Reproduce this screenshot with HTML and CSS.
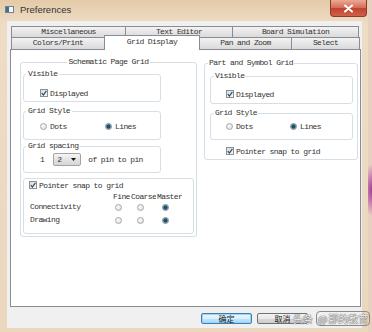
FILE: index.html
```html
<!DOCTYPE html>
<html lang="en">
    <head>
        <meta charset="UTF-8" />
        <title>Preferences</title>
        <link rel="stylesheet" href="styles.css">
    </head>
    <body>
        <div class="window">
            <div class="titlebar">
                <span class="app-icon"></span>
                <span class="title">Preferences</span>
                <span class="close">
                    <svg width="11" height="9" viewBox="0 0 11 9"><path d="M2 1.5 L9 7.5 M9 1.5 L2 7.5" stroke="#fff" stroke-width="2" stroke-linecap="round"/></svg>
                </span>
            </div>

            <div class="client">
                <div class="tab-row row1">
                    <div class="tab t-misc">Miscellaneous</div>
                    <div class="tab t-text">Text Editor</div>
                    <div class="tab t-board">Board Simulation</div>
                </div>
                <div class="tab-row row2">
                    <div class="tab t-colors">Colors/Print</div>
                    <div class="tab t-grid active">Grid Display</div>
                    <div class="tab t-pan">Pan and Zoom</div>
                    <div class="tab t-select">Select</div>
                </div>

                <div class="panel">
                    <fieldset class="group outer schematic">
                        <legend class="centered">Schematic Page Grid</legend>

                        <fieldset class="group inner l-visible">
                            <legend>Visible</legend>
                            <div class="row indent">
                                <span class="cb"><svg width="6" height="6" viewBox="0 0 6 6"><path d="M0.8 3.2 L2.4 5 L5.4 0.8" fill="none" stroke="#2b4d6e" stroke-width="1.2"/></svg></span>
                                <span class="lbl">Displayed</span>
                            </div>
                        </fieldset>

                        <fieldset class="group inner l-style">
                            <legend>Grid Style</legend>
                            <div class="row indent">
                                <span class="opt l-dots"><span class="rb"></span>Dots</span>
                                <span class="opt"><span class="rb on"></span>Lines</span>
                            </div>
                        </fieldset>

                        <fieldset class="group inner l-spacing">
                            <legend>Grid spacing</legend>
                            <div class="row tall indent">
                                <span>1</span>
                                <span class="dropdown">2<svg width="5" height="3" viewBox="0 0 5 3"><path d="M0 0 H5 L2.5 3 Z" fill="#111"/></svg></span>
                                <span class="after-drop">of pin to pin</span>
                            </div>
                        </fieldset>

                        <div class="snapbox">
                            <div class="row">
                                <span class="cb"><svg width="6" height="6" viewBox="0 0 6 6"><path d="M0.8 3.2 L2.4 5 L5.4 0.8" fill="none" stroke="#2b4d6e" stroke-width="1.2"/></svg></span>
                                <span class="lbl">Pointer snap to grid</span>
                            </div>
                            <div class="snap-grid">
                                <span></span>
                                <span class="hd">Fine</span>
                                <span class="hd">Coarse</span>
                                <span class="hd">Master</span>

                                <span class="name">Connectivity</span>
                                <span class="rb c-fine"></span>
                                <span class="rb c-coarse"></span>
                                <span class="rb on c-master"></span>

                                <span class="name">Drawing</span>
                                <span class="rb c-fine"></span>
                                <span class="rb c-coarse"></span>
                                <span class="rb on c-master"></span>
                            </div>
                        </div>
                    </fieldset>

                    <fieldset class="group outer part">
                        <legend class="shifted">Part and Symbol Grid</legend>

                        <fieldset class="group inner r-visible">
                            <legend>Visible</legend>
                            <div class="row r-indent">
                                <span class="cb"><svg width="6" height="6" viewBox="0 0 6 6"><path d="M0.8 3.2 L2.4 5 L5.4 0.8" fill="none" stroke="#2b4d6e" stroke-width="1.2"/></svg></span>
                                <span class="lbl">Displayed</span>
                            </div>
                        </fieldset>

                        <fieldset class="group inner r-style">
                            <legend>Grid Style</legend>
                            <div class="row r-indent">
                                <span class="opt r-dots"><span class="rb"></span>Dots</span>
                                <span class="opt"><span class="rb on"></span>Lines</span>
                            </div>
                        </fieldset>

                        <div class="row r-snap">
                            <span class="cb"><svg width="6" height="6" viewBox="0 0 6 6"><path d="M0.8 3.2 L2.4 5 L5.4 0.8" fill="none" stroke="#2b4d6e" stroke-width="1.2"/></svg></span>
                            <span class="lbl">Pointer snap to grid</span>
                        </div>
                    </fieldset>
                </div>

                <div class="buttons">
                    <button class="btn default">确定</button>
                    <button class="btn">取消</button>
                    <div class="watermark">
                        <span class="wm-brand">头条</span>
                        <span class="wm-box"><span class="wm-at">@</span>那的教育</span>
                    </div>
                </div>
            </div>
        </div>
    </body>
</html>
```

FILE: styles.css
```css
* {
  box-sizing: border-box;
}
body {
  margin: 0;
  width: 372px;
  height: 332px;
  overflow: hidden;
  background: radial-gradient(ellipse 10px 26px at 372px 190px, #9a3f92 0, #c97fb0 50%, #e7d0bf 100%), #e8d4bd;
  font-family: 'Liberation Mono', monospace;
  font-size: 8px;
  letter-spacing: -0.6px;
  color: #333;
}
.window {
  width: 368px;
  height: 332px;
  display: flex;
  flex-direction: column;
  padding-bottom: 4px;
  background: linear-gradient(180deg, #e4cba8, #eedcc5 24px, #ead7be);
}

/* title bar */
.titlebar {
  height: 21px;
  display: flex;
  align-items: flex-start;
}
.app-icon {
  margin: 6px 0 0 5px;
  width: 9px;
  height: 7px;
  border: 1px solid #6f8391;
  background: linear-gradient(90deg, #3f6f9a 0 3px, #f4f7fa 3px);
}
.title {
  margin: 4px 0 0 6px;
  font-family: 'Liberation Sans', sans-serif;
  font-size: 9.5px;
  letter-spacing: 0;
  line-height: 12px;
  color: #333;
}
.close {
  margin-left: auto;
  margin-right: 1px;
  width: 37px;
  height: 17px;
  display: flex;
  align-items: center;
  justify-content: center;
  border: 1px solid #8e3a2e;
  border-top: none;
  border-radius: 0 0 4px 4px;
  background: linear-gradient(180deg, #e9a996, #d46a55 50%, #c2422d 51%, #d0604a);
}

/* client area */
.client {
  flex: 1;
  margin: 0 6px 0 7px;
  padding: 5px 1px 0 3px;
  background: #f0f0f0;
  display: flex;
  flex-direction: column;
}

/* tabs */
.tab-row {
  display: flex;
  margin: 0 1px;
}
.row1 {
  height: 11px;
}
.row2 {
  height: 12px;
  align-items: flex-end;
}
.tab {
  height: 100%;
  border: 1px solid #898c95;
  border-bottom: none;
  margin-left: -1px;
  background: linear-gradient(180deg, #f3f3f3, #e6e6e6 50%, #dadada);
  text-align: center;
  line-height: 10px;
  white-space: nowrap;
}
.tab:first-child {
  margin-left: 0;
}
.t-misc { width: 115px; }
.t-text { width: 108px; }
.t-board { width: 127px; }
.t-colors { width: 94px; }
.t-grid { width: 96px; }
.t-pan { width: 93px; }
.t-select { width: 69px; }
.tab.active {
  position: relative;
  z-index: 1;
  height: 15px;
  margin-bottom: -1px;
  background: #fff;
  line-height: 12px;
}

/* panel */
.panel {
  height: 258px;
  border: 1px solid #898c95;
  background: #fff;
  display: grid;
  grid-template-columns: 177px 154px;
  column-gap: 7px;
  align-items: start;
  padding: 7px 0 0 9px;
}
.group {
  margin: 0;
  min-width: 0;
  border: 1px solid #d5dfe5;
  border-radius: 3px;
}
.group legend {
  padding: 0 2px;
  line-height: 10px;
}
.group legend.centered {
  margin: 0 auto;
}
.schematic {
  padding: 2px 2px 2px 2px;
}
.part {
  margin-top: 1px;
  padding: 3px 4px 3px 5px;
}
.part legend.shifted {
  margin-left: -2px;
  padding: 0 1px;
}

.inner {
  width: 138px;
  padding-left: 2px;
  padding-right: 2px;
}
.l-visible { padding-top: 9px; padding-bottom: 3px; margin-bottom: 4px; }
.l-style { padding-top: 5px; padding-bottom: 8px; margin-bottom: 1px; }
.l-spacing { padding-top: 2px; padding-bottom: 6px; margin-bottom: 5px; }

.part .inner {
  width: 143px;
  padding-left: 3px;
}
.part .inner legend {
  padding: 0 1px;
}
.r-visible { padding-top: 8px; padding-bottom: 4px; margin-bottom: 4px; }
.r-style { padding-top: 3px; padding-bottom: 8px; }

/* rows and controls */
.row {
  display: flex;
  align-items: center;
  height: 10px;
  white-space: nowrap;
}
.row.tall {
  height: 13px;
}
.indent {
  padding-left: 14px;
}
.r-indent {
  padding-left: 12px;
}
.r-snap {
  margin: 6px 0 0 16px;
}
.cb {
  width: 8px;
  height: 8px;
  flex-shrink: 0;
  display: flex;
  align-items: center;
  justify-content: center;
  border: 1px solid #8e8f8f;
  background: linear-gradient(135deg, #d6dbe0, #f7f8f9);
}
.lbl {
  margin-left: 2px;
}
.opt {
  display: flex;
  align-items: center;
}
.l-dots {
  width: 65px;
}
.r-dots {
  width: 64px;
}
.rb {
  width: 7px;
  height: 7px;
  flex-shrink: 0;
  margin-right: 3px;
  border: 1px solid #a8a8a8;
  border-radius: 50%;
  background: radial-gradient(circle at 40% 40%, #fdfdfd, #d6d6d6);
}
.rb.on {
  border-color: #7e8a92;
  background: radial-gradient(circle, #1e4f66 0 1.6px, #5f93a8 2.2px, #e4e8ea 3px);
}
.dropdown {
  margin-left: 9px;
  width: 28px;
  height: 13px;
  display: flex;
  align-items: center;
  justify-content: space-between;
  padding: 0 4px 0 3px;
  border: 1px solid #a3a3a3;
  border-radius: 2px;
  background: linear-gradient(180deg, #f6f6f6, #e3e3e3 50%, #d6d6d6);
}
.after-drop {
  margin-left: 7px;
}

/* snap box */
.snapbox {
  border: 1px solid #d5dfe5;
  border-radius: 3px;
  padding: 1px 0 6px 5px;
}
.snap-grid {
  margin-top: 2px;
  display: grid;
  grid-template-columns: 83px 18px 26px 26px;
  grid-template-rows: 9px 13px 13px;
  align-items: center;
}
.hd {
  padding-left: 1px;
  overflow: hidden;
  white-space: nowrap;
  line-height: 9px;
}
.name {
  padding-left: 1px;
  line-height: 10px;
  align-self: start;
  margin-top: 1px;
}
.snap-grid .rb {
  margin-right: 0;
}
.c-fine { margin-left: 3px; }
.c-coarse { margin-left: 7px; }
.c-master { margin-left: 6px; }

/* buttons */
.buttons {
  position: relative;
  display: flex;
  padding: 6px 0 0 191px;
}
.btn {
  width: 51px;
  height: 11px;
  margin: 0 5px 0 0;
  padding: 0;
  border: 1px solid #707070;
  border-radius: 2px;
  background: linear-gradient(180deg, #f3f3f3, #e8e8e8 50%, #d8d8d8 51%, #cfcfcf);
  font-family: 'Noto Sans CJK SC', sans-serif;
  font-size: 8px;
  letter-spacing: 0;
  line-height: 9px;
  color: #1a1a1a;
}
.btn.default {
  border-color: #3c7fb1;
  background: linear-gradient(180deg, #eaf6fd, #d9f0fc 50%, #bee6fd 51%, #a7d9f5);
  box-shadow: inset 0 0 0 1px #9dd3f3;
}
.watermark {
  position: absolute;
  left: 283px;
  top: 4px;
  display: flex;
  align-items: center;
  gap: 3px;
  font-family: 'Noto Sans CJK SC', sans-serif;
  font-size: 10px;
  letter-spacing: 0;
  line-height: 12px;
  color: #f4f4f4;
  text-shadow: 0 0 1px #444, 0 0 1px #444;
  white-space: nowrap;
}
.wm-box {
  display: flex;
  align-items: center;
  padding: 0 1px;
  border: 1px solid #8a8a8a;
  border-radius: 4px;
  height: 15px;
}
.wm-at {
  margin-right: 1px;
}
```
